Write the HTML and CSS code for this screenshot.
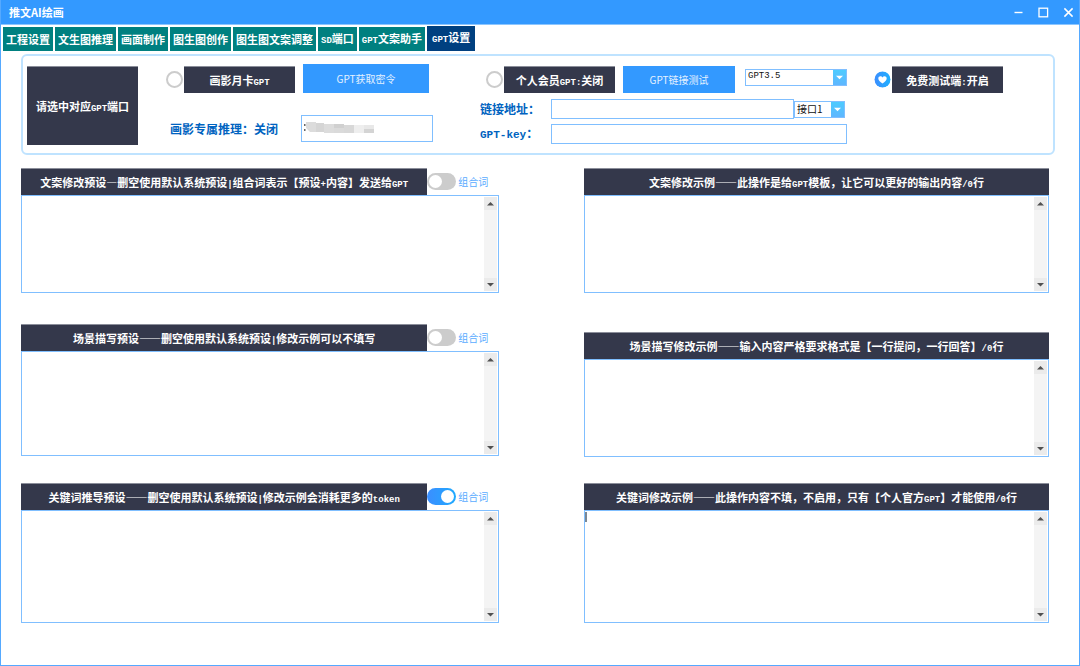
FILE: index.html
```html
<!DOCTYPE html>
<html lang="zh-CN">
<head>
<meta charset="utf-8">
<title>推文AI绘画</title>
<link rel="stylesheet" href="styles.css">
</head>
<body>
<div class="window">
  <header class="titlebar">
    <h1 class="title">推文AI绘画</h1>
    <div class="window-buttons">
      <button type="button" aria-label="最小化"><svg width="11" height="11" viewBox="0 0 11 11"><path d="M1.500 5.500h8" stroke="#fff" stroke-width="1.4"/></svg></button>
      <button type="button" aria-label="最大化"><svg width="11" height="11" viewBox="0 0 11 11"><rect x="1" y="1.2" width="8.600" height="8.600" fill="none" stroke="#fff" stroke-width="1.3"/></svg></button>
      <button type="button" aria-label="关闭"><svg width="11" height="11" viewBox="0 0 11 11"><path d="M1.400 1.400l8.200 8.200M9.600 1.400l-8.200 8.200" stroke="#fff" stroke-width="1.5"/></svg></button>
    </div>
  </header>

  <nav class="tabs">
    <button type="button" class="tab">工程设置</button>
    <button type="button" class="tab">文生图推理</button>
    <button type="button" class="tab">画面制作</button>
    <button type="button" class="tab">图生图创作</button>
    <button type="button" class="tab">图生图文案调整</button>
    <button type="button" class="tab"><span class="half">SD</span>端口</button>
    <button type="button" class="tab"><span class="half">GPT</span>文案助手</button>
    <button type="button" class="tab tab-active"><span class="half">GPT</span>设置</button>
  </nav>

  <main class="content">
    <section class="ports">
      <div class="plate plate-tall">请选中对应<span class="half">GPT</span>端口</div>

      <div class="port port-card">
        <div class="port-row">
          <input type="radio" name="port" id="port-card" class="radio">
          <label for="port-card" class="plate">画影月卡<span class="half">GPT</span></label>
          <button type="button" class="action action-tall">GPT获取密令</button>
        </div>
        <div class="token-row">
          <label for="token" class="caption">画影专属推理：关闭</label>
          <div class="token">
            <input type="text" id="token" class="field">
            <svg class="mosaic" width="72" height="12" viewBox="0 0 72 12" aria-hidden="true">
              <path d="M0 2h1.500v2H0zM0 7h1.500v2H0z" fill="#666"/>
              <path d="M2 0h10v10H6L2 6z" fill="#dcdcdc"/>
              <path d="M12 1h8v9h-8z" fill="#d5d5d5"/><path d="M20 2h10v9H20z" fill="#dcdcdc"/>
              <path d="M30 2h10v4H30z" fill="#d0d0d0"/><path d="M30 6h10v5H30z" fill="#dadada"/>
              <path d="M40 3h10v8H40z" fill="#d8d8d8"/><path d="M50 3h10v8H50z" fill="#eee"/>
              <path d="M60 3h10v4H60z" fill="#e8e8e8"/><path d="M60 7h10v4H60z" fill="#d4d4d4"/>
            </svg>
          </div>
        </div>
      </div>

      <div class="port port-member">
        <div class="port-row">
          <input type="radio" name="port" id="port-member" class="radio">
          <label for="port-member" class="plate">个人会员<span class="half">GPT:</span>关闭</label>
          <button type="button" class="action">GPT链接测试</button>
          <select class="select select-model" aria-label="模型"><option>GPT3.5</option></select>
        </div>
        <div class="field-row">
          <label for="address" class="caption">链接地址：</label>
          <input type="text" id="address" class="field">
          <select class="select select-api" aria-label="接口"><option>接口1</option></select>
        </div>
        <div class="field-row">
          <label for="key" class="caption"><span class="mono">GPT-key</span>：</label>
          <input type="text" id="key" class="field">
        </div>
      </div>

      <div class="port port-free">
        <div class="port-row">
          <input type="radio" name="port" id="port-free" class="radio" checked>
          <label for="port-free" class="plate">免费测试端<span class="half">:</span>开启</label>
        </div>
      </div>
    </section>

    <div class="editors">
      <div class="column">
        <section class="editor">
          <div class="editor-head">
            <label for="copy-preset" class="plate">文案修改预设—删空使用默认系统预设<span class="half">|</span>组合词表示【预设<span class="half">+</span>内容】发送给<span class="half">GPT</span></label>
            <label class="switch-label"><input type="checkbox" class="switch">组合词</label>
          </div>
          <div class="box">
            <textarea id="copy-preset" class="area"></textarea>
            <div class="scroll"><button type="button" class="arrow arrow-up" aria-label="向上"></button><button type="button" class="arrow arrow-down" aria-label="向下"></button></div>
          </div>
        </section>
        <section class="editor editor-preset-scene">
          <div class="editor-head">
            <label for="scene-preset" class="plate">场景描写预设——删空使用默认系统预设<span class="half">|</span>修改示例可以不填写</label>
            <label class="switch-label"><input type="checkbox" class="switch">组合词</label>
          </div>
          <div class="box box-medium">
            <textarea id="scene-preset" class="area"></textarea>
            <div class="scroll"><button type="button" class="arrow arrow-up" aria-label="向上"></button><button type="button" class="arrow arrow-down" aria-label="向下"></button></div>
          </div>
        </section>
        <section class="editor">
          <div class="editor-head">
            <label for="word-preset" class="plate">关键词推导预设——删空使用默认系统预设<span class="half">|</span>修改示例会消耗更多的<span class="half">token</span></label>
            <label class="switch-label"><input type="checkbox" class="switch" checked>组合词</label>
          </div>
          <div class="box box-large">
            <textarea id="word-preset" class="area"></textarea>
            <div class="scroll"><button type="button" class="arrow arrow-up" aria-label="向上"></button><button type="button" class="arrow arrow-down" aria-label="向下"></button></div>
          </div>
        </section>
      </div>

      <div class="column">
        <section class="editor">
          <div class="editor-head">
            <label for="copy-sample" class="plate plate-full">文案修改示例——此操作是给<span class="half">GPT</span>模板，让它可以更好的输出内容<span class="half">/0</span>行</label>
          </div>
          <div class="box">
            <textarea id="copy-sample" class="area"></textarea>
            <div class="scroll"><button type="button" class="arrow arrow-up" aria-label="向上"></button><button type="button" class="arrow arrow-down" aria-label="向下"></button></div>
          </div>
        </section>
        <section class="editor editor-sample-scene">
          <div class="editor-head">
            <label for="scene-sample" class="plate plate-full">场景描写修改示例——输入内容严格要求格式是【一行提问，一行回答】<span class="half">/0</span>行</label>
          </div>
          <div class="box">
            <textarea id="scene-sample" class="area"></textarea>
            <div class="scroll"><button type="button" class="arrow arrow-up" aria-label="向上"></button><button type="button" class="arrow arrow-down" aria-label="向下"></button></div>
          </div>
        </section>
        <section class="editor">
          <div class="editor-head">
            <label for="word-sample" class="plate plate-full">关键词修改示例——此操作内容不填，不启用，只有【个人官方<span class="half">GPT</span>】才能使用<span class="half">/0</span>行</label>
          </div>
          <div class="box box-large">
            <span class="caret"></span>
            <textarea id="word-sample" class="area"></textarea>
            <div class="scroll"><button type="button" class="arrow arrow-up" aria-label="向上"></button><button type="button" class="arrow arrow-down" aria-label="向下"></button></div>
          </div>
        </section>
      </div>
    </div>
  </main>
</div>
</body>
</html>
```

FILE: styles.css
```css
* {
  box-sizing: border-box;
}

body {
  margin: 0;
  background: #fff;
  font-family: "Noto Sans CJK SC", sans-serif;
  font-size: 11px;
  line-height: 16px;
}

button,
input,
select,
textarea {
  margin: 0;
  padding: 0;
  border: 0;
  border-radius: 0;
  outline: 0;
  font: inherit;
}

.window {
  min-height: 100vh;
  border: 1px solid #55a9ff;
  border-top: 0;
}

/* Title bar */
.titlebar {
  display: flex;
  align-items: center;
  justify-content: space-between;
  height: 25px;
  padding: 0 5px 0 8px;
  background: #3399ff;
  border-bottom: 1px solid #8cc6ff;
  color: #fff;
}

.title {
  margin: 0;
  font-size: 11px;
}

.window-buttons {
  display: flex;
  gap: 14px;
}

.window-buttons button {
  display: flex;
  background: none;
}

/* Tabs */
.tabs {
  display: flex;
  align-items: flex-end;
  gap: 2px;
  padding: 1px 2px 0;
}

.tab {
  height: 24px;
  padding: 0 3px;
  background: #008080;
  color: #fff;
  font-weight: bold;
  white-space: nowrap;
}

.tab-active {
  height: 25px;
  padding: 0 5px;
  background: #004080;
}

/* Half-width characters set beside full-width ones */
.half {
  font-family: "Liberation Mono", monospace;
  font-size: 9px;
}

.mono {
  font-family: "Liberation Mono", monospace;
  font-size: 11px;
}

.content {
  padding: 3px 24px 0 20px;
}

/* Port selection */
.ports {
  display: flex;
  height: 101px;
  padding: 10px 50px 0 4px;
  border: 2px solid #bfe3ff;
  border-radius: 6px;
}

.plate {
  flex: none;
  width: 111px;
  height: 27px;
  background: #34384b;
  border-top: 1px solid #8b8e9a;
  color: #fff;
  font-weight: bold;
  line-height: 26px;
  text-align: center;
  white-space: nowrap;
}

.plate-tall {
  height: 79px;
  line-height: 78px;
}

.port-row {
  display: flex;
  align-items: center;
  height: 27px;
}

.radio {
  appearance: none;
  flex: none;
  width: 17px;
  height: 17px;
  margin-right: 1px;
  border: 2px solid #ccc;
  border-radius: 50%;
  background: #fff;
}

.radio:checked {
  border: 0;
  background: url("data:image/svg+xml,%3Csvg xmlns='http://www.w3.org/2000/svg' viewBox='0 0 17 17'%3E%3Cdefs%3E%3ClinearGradient id='g'%3E%3Cstop stop-color='%233b8eff'/%3E%3Cstop offset='1' stop-color='%231fb0ff'/%3E%3C/linearGradient%3E%3C/defs%3E%3Ccircle cx='8.500' cy='8.500' r='8' fill='url(%23g)'/%3E%3Cpath d='M8.500 12.500C6 10.800 4.300 9.300 4.300 7.300C4.300 4.900 7.400 4.400 8.500 6.400C9.600 4.400 12.700 4.900 12.700 7.300C12.700 9.300 11 10.800 8.500 12.500Z' fill='%23fff'/%3E%3C/svg%3E");
}

.action {
  width: 112px;
  height: 27px;
  margin-left: 8px;
  background: #3399ff;
  color: #e4f1ff;
  font-size: 10px;
}

.action-tall {
  align-self: flex-end;
  width: 126px;
  height: 29px;
}

.port-card {
  margin-left: 28px;
}

.token-row {
  display: flex;
  align-items: center;
  justify-content: space-between;
  margin: 22px -4px 0 4px;
}

.caption {
  color: #0063c0;
  font-size: 12px;
  font-weight: bold;
  white-space: nowrap;
}

.field {
  flex: 1;
  min-width: 0;
  height: 20px;
  padding: 0 4px;
  background: #fff;
  border: 1px solid #80bfff;
}

.token {
  position: relative;
  display: flex;
  width: 132px;
}

.token .field {
  height: 27px;
}

.mosaic {
  position: absolute;
  top: 7px;
  left: 3px;
}

.port-member {
  flex: 1;
  margin-left: 51px;
}

.port-member .port-row {
  padding-left: 6px;
}

.field-row {
  display: flex;
  align-items: center;
  margin-top: 5px;
}

.field-row .caption {
  width: 71px;
}

.port-row + .field-row {
  margin-top: 6px;
}

.select {
  appearance: none;
  height: 17px;
  padding: 0 14px 2px 2px;
  border: 1px solid #80bfff;
  background: url("data:image/svg+xml,%3Csvg xmlns='http://www.w3.org/2000/svg' viewBox='0 0 13 16'%3E%3Cdefs%3E%3ClinearGradient id='g' x2='0' y2='1'%3E%3Cstop stop-color='%234cccff'/%3E%3Cstop offset='1' stop-color='%235fb5ff'/%3E%3C/linearGradient%3E%3C/defs%3E%3Cpath d='M0 0h13v16H0z' fill='url(%23g)'/%3E%3Cpath d='M3 6h7L6.500 9.500z' fill='%23fff'/%3E%3C/svg%3E") right center / 13px 16px no-repeat #fff;
  color: #111;
  font-size: 10px;
  line-height: 13px;
}

.select-model {
  flex: 1;
  align-self: flex-start;
  margin: 3px 0 0 10px;
  font-family: "Liberation Mono", monospace;
  font-size: 9px;
}

.select-api {
  width: 51px;
  margin-right: 2px;
}

.port-free {
  margin-left: 27px;
}

/* Preset and sample editors */
.editors {
  display: grid;
  grid-template-columns: 478fr 465fr;
  column-gap: 85px;
  padding: 13px 6px 0 0;
}

.editor-preset-scene {
  margin: 31px 0 27px;
}

.editor-sample-scene {
  margin: 39px 0 26px;
}

.editor-head {
  display: flex;
  align-items: center;
}

.editor-head .plate {
  flex: 0 0 85%;
}

.editor-head .plate-full {
  flex: 1;
}

.switch-label {
  display: flex;
  align-items: center;
  gap: 2px;
  color: #59abff;
  font-size: 10px;
  white-space: nowrap;
}

.switch {
  appearance: none;
  width: 29px;
  height: 17px;
  padding: 2px;
  border-radius: 9px;
  background: #ccc;
}

.switch::before {
  content: "";
  display: block;
  width: 13px;
  height: 13px;
  border-radius: 50%;
  background: #fff;
}

.switch:checked {
  background: linear-gradient(90deg, #3b8eff, #1faaff);
}

.switch:checked::before {
  margin-left: auto;
}

.box {
  position: relative;
  display: flex;
  height: 98px;
  padding: 1px;
  border: 1px solid #80bfff;
}

.box-medium {
  height: 105px;
}

.box-large {
  height: 113px;
}

.area {
  flex: 1;
  resize: none;
  overflow: hidden;
  background: #fff;
}

.scroll {
  display: flex;
  flex-direction: column;
  justify-content: space-between;
  width: 13px;
  background: #f4f4f4;
}

.arrow {
  height: 13px;
  background: url("data:image/svg+xml,%3Csvg xmlns='http://www.w3.org/2000/svg' viewBox='0 0 13 13'%3E%3Cpath d='M3 8.500h7L6.500 5z' fill='%23505050'/%3E%3C/svg%3E") center / 13px 13px no-repeat #ebebeb;
}

.arrow-down {
  background-image: url("data:image/svg+xml,%3Csvg xmlns='http://www.w3.org/2000/svg' viewBox='0 0 13 13'%3E%3Cpath d='M3 5h7L6.500 8.500z' fill='%23505050'/%3E%3C/svg%3E");
}

.caret {
  position: absolute;
  top: 1px;
  left: 0;
  width: 2px;
  height: 10px;
  background: #7b8895;
}
```
